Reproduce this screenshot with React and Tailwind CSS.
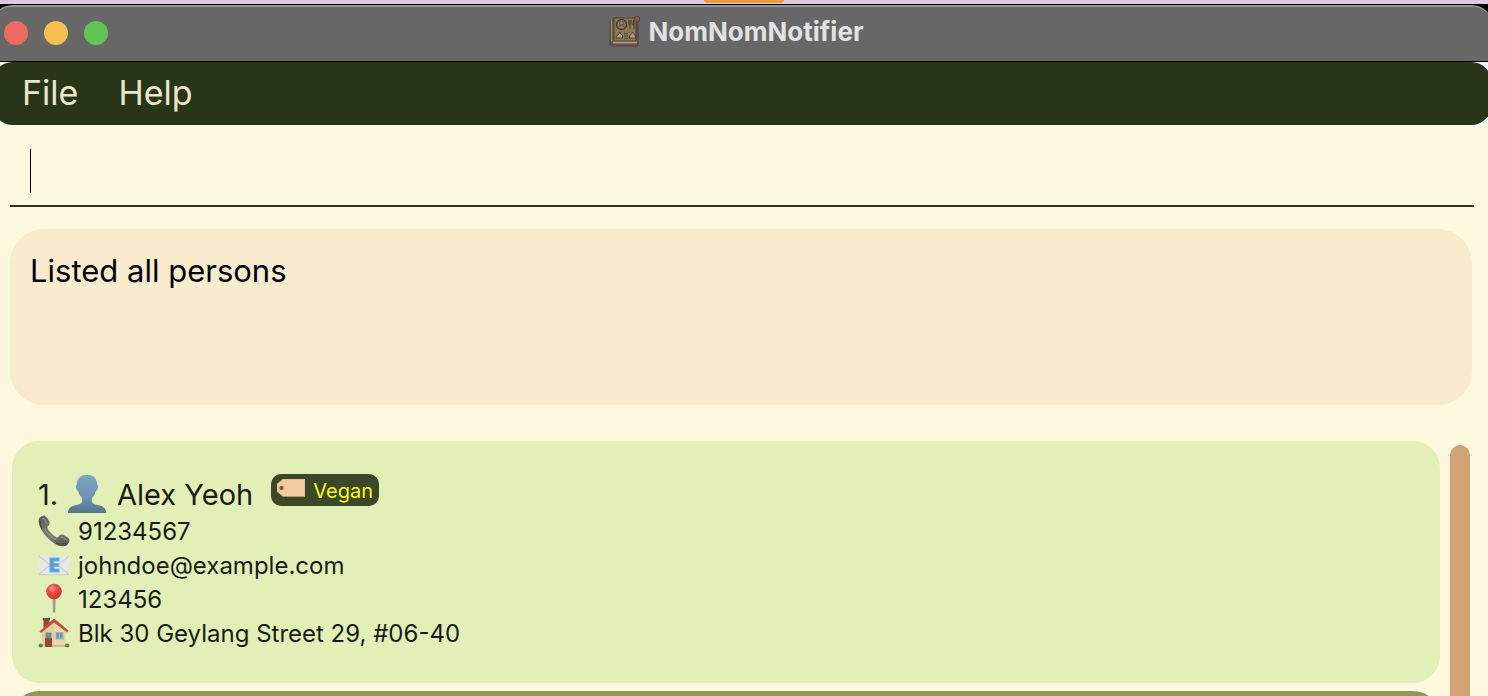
import React from "react";

function BookIcon() {
  return (
    <svg viewBox="0 0 32 32" className="size-8" aria-hidden="true">
      <path d="M3 4 Q1 4 1 7 V26 Q1 30 4 30 H28 Q29 30 29 28 V4 Z" fill="#74583d" stroke="#4e4248" strokeWidth="1.2" />
      <path d="M5 2 H27 V25 H5 Z" fill="#8b7a4f" stroke="#4c4143" strokeWidth="1.2" />
      <path d="M2.500 3.500 V25" stroke="#a1844e" strokeWidth="1.400" />
      <path d="M4 26.500 H28" stroke="#a89a80" strokeWidth="1.800" />
      <path d="M2 29.500 H28" stroke="#674950" strokeWidth="1.500" />
      <circle cx="12.500" cy="8.500" r="5" fill="#8c7f58" stroke="#413c42" strokeWidth="1.400" />
      <circle cx="12.500" cy="7" r="2" fill="#a6854c" stroke="#4d4242" strokeWidth=".8" />
      <path d="M9 12 Q9.500 9.500 12.500 9.500 T16 12" fill="#a6854c" stroke="#4d4242" strokeWidth=".8" />
      <path d="M20 4 V7.500 Q20 8.500 21 8.500 T22 7.500 V4 M21 4 V13 M25 13 V4 Q23.500 6 24 9 H25" fill="none" stroke="#413c42" strokeWidth="1" />
      <circle cx="28" cy="3" r="2.800" fill="#80623e" stroke="#4d4248" strokeWidth="1" />
      <path d="M7 22 Q7.500 19 10 18 L10.500 16 L12 18 Q14 19 14 22 Z M20 22 Q20.500 19 22.500 18 L23.500 16 L25 18 Q26.500 19 26.500 22 Z" fill="#b3a076" stroke="#464047" strokeWidth="1" />
      <path d="M15 17.500 H19 M15 20 H19 M15 22.500 H19" stroke="#4d493e" strokeWidth="1" />
    </svg>
  );
}

function PersonIcon() {
  return (
    <svg viewBox="0 0 40 40" className="size-10" aria-hidden="true">
      <defs>
        <linearGradient id="bust" x1="0" y1="0" x2="0" y2="1">
          <stop offset="0" stopColor="#7fa6c4" />
          <stop offset=".6" stopColor="#7092ae" />
          <stop offset="1" stopColor="#53748f" />
        </linearGradient>
      </defs>
      <path
        d="M20 .8 C13.500 .8 9.800 5 9.800 10.500 Q8.600 11 9 13.500 Q9.500 16.500 11 17 Q12 21 15 24 V28 Q14.500 30 9 31 Q1 32.500 .8 39 H39.300 Q39 32.500 31 31 Q25.500 30 25 28 V24 Q28 21 29 17 Q30.500 16.500 31 13.500 Q31.400 11 30.200 10.500 C30.200 5 26.500 .8 20 .8 Z"
        fill="url(#bust)"
      />
    </svg>
  );
}

function PhoneIcon() {
  return (
    <svg viewBox="0 0 32 32" className="size-8" aria-hidden="true">
      <defs>
        <linearGradient id="handset" x1="0" y1="0" x2="1" y2="1">
          <stop offset="0" stopColor="#5a5d58" />
          <stop offset=".5" stopColor="#797b77" />
          <stop offset="1" stopColor="#4e514e" />
        </linearGradient>
      </defs>
      <path
        d="M1 3.500 Q3 .5 6.500 .5 Q9 2 11.300 6.500 Q12.500 9.500 9.500 11.500 Q8.500 13 12 17 Q15.500 21 18.500 22.500 Q20.500 23 21.500 20.500 Q23.500 18.500 26.500 20.500 Q30.500 22.500 31.500 25 Q31 29 27.500 31 Q22 32.500 15 27.500 Q7.500 22 3.500 15 Q-.5 8 1 3.500 Z"
        fill="url(#handset)"
      />
      <path d="M4 3 Q7 4 8.500 9 M6 13 Q10 20 18 25 M23 22 Q28 23 29 26" fill="none" stroke="#92958e" strokeWidth="1.300" />
      <path d="M2 6 Q2 10 4 14 M18 28 Q23 31 28 28" fill="none" stroke="#444744" strokeWidth="1.200" />
    </svg>
  );
}

function MailIcon() {
  return (
    <svg viewBox="0 0 32 32" className="size-8" aria-hidden="true">
      <rect x=".8" y="6" width="30.500" height="20" rx="1" fill="#e5e8e6" />
      <path d="M1 7 L13 17 Q16 19 19 17 L31 7 M1 25.500 L12 16 M31 25.500 L20 16" fill="none" stroke="#cbd0d0" strokeWidth="1.200" />
      <path d="M1 25.700 H31" stroke="#c5cac5" strokeWidth="1" />
      <path d="M12 9 H21 V12 H15.800 V14.500 H20.500 V17.300 H15.800 V20 H21 V23 H12 Z" fill="#559bd8" stroke="#78b0df" strokeWidth="1.2" />
    </svg>
  );
}

function PinIcon() {
  return (
    <svg viewBox="0 0 32 32" className="size-8" aria-hidden="true">
      <defs>
        <radialGradient id="pinhead" cx=".38" cy=".3" r=".75">
          <stop offset="0" stopColor="#ff9b8e" />
          <stop offset=".35" stopColor="#ec5147" />
          <stop offset="1" stopColor="#c92f2b" />
        </radialGradient>
      </defs>
      <path d="M14.600 14 H17.600 L17.300 29 L16 30 L14.900 29 Z" fill="#989e87" />
      <circle cx="16" cy="8.500" r="7.800" fill="url(#pinhead)" />
    </svg>
  );
}

function HouseIcon() {
  return (
    <svg viewBox="0 0 32 32" className="size-8" aria-hidden="true">
      <path d="M5.500 2 H11.500 V9 L5.500 13 Z" fill="#9c4939" />
      <path d="M4.800 1 H12 V3.200 H4.800 Z" fill="#74483d" />
      <path d="M4 14 L16 4 L28 14 V30 H4 Z" fill="#ebd7ab" />
      <path d="M4 14 L16 4 V30 H4 Z" fill="#e4cda0" />
      <path d="M1.500 14.500 L15 2.300 Q16 1.500 17 2.300 L30.500 13.500 L29 15.500 L16 5.500 L3 16 Z" fill="#bd5043" />
      <rect x="7" y="21" width="7" height="9" fill="#8c4b32" />
      <rect x="8" y="16" width="5" height="5" fill="#579ac4" stroke="#a1704f" strokeWidth=".8" />
      <rect x="18" y="15.500" width="7" height="6.500" fill="#59a2cf" stroke="#bfa989" strokeWidth="1" />
      <path d="M21.500 16 V22" stroke="#94bfcb" strokeWidth=".8" />
      <path d="M14 28 H28 V30 H14 Z" fill="#d3b993" />
      <ellipse cx="2.800" cy="28.500" rx="2.300" ry="2" fill="#648a3c" />
      <ellipse cx="29.200" cy="28.500" rx="2.300" ry="2" fill="#648a3c" />
    </svg>
  );
}

function TagIcon() {
  return (
    <svg viewBox="0 0 28 18" className="mb-1 h-[18px] w-7" aria-hidden="true">
      <path d="M6 0 H28 V17.500 H6 L0 12.500 V5 Z" fill="#f3cba1" stroke="#c4a580" strokeWidth=".6" />
      <circle cx="4.500" cy="9" r="2.300" fill="#876c54" />
      <circle cx="4.500" cy="9" r=".9" fill="#51482f" />
    </svg>
  );
}

const details = [
  { Icon: PhoneIcon, text: "91234567" },
  { Icon: MailIcon, text: "johndoe@example.com" },
  { Icon: PinIcon, text: "123456" },
  { Icon: HouseIcon, text: "Blk 30 Geylang Street 29, #06-40" },
];

function PersonCard() {
  return (
    <li className="rounded-[27px] bg-[#e2efb7] px-[26px] py-[33px] text-[#181c14]">
      <div className="flex h-10 items-center">
        <h2 className="flex items-center text-[29px] leading-10">
          <span className="w-[29px] pt-0.5">1.</span>
          <PersonIcon />
          <span className="ml-2.5 pt-0.5">Alex Yeoh</span>
        </h2>
        <span className="mb-2 ml-[18px] flex h-8 items-center gap-2 rounded-[10px] bg-[#3c4728] px-1.5 text-[20px] text-[#fbfb1d]">
          <TagIcon />
          <span className="pt-0.5">Vegan</span>
        </span>
      </div>
      <ul>
        {details.map(({ Icon, text }) => (
          <li key={text} className="flex h-[34px] items-center gap-2 text-[24px]">
            <Icon />
            <span className="pt-0.5">{text}</span>
          </li>
        ))}
      </ul>
    </li>
  );
}

function TitleBar() {
  return (
    <div className="bg-black">
      <header className="-mr-1 -ml-2 flex h-14 items-center rounded-t-[20px] border-t-2 border-[#929292] bg-[#676767] pr-6 pb-0.5 pl-3">
        <div className="flex flex-1 gap-4">
          <button aria-label="Close" className="size-6 rounded-full bg-[#ed6a5f]" />
          <button aria-label="Minimize" className="size-6 rounded-full bg-[#f5bf4f]" />
          <button aria-label="Zoom" className="size-6 rounded-full bg-[#61c554]" />
        </div>
        <h1 className="flex items-center gap-2 pb-0.5 text-[26px] leading-8 font-bold text-[#e2e2e2]">
          <BookIcon />
          NomNomNotifier
        </h1>
        <div className="flex-1" />
      </header>
    </div>
  );
}

export default function App() {
  return (
    <div className="flex h-screen flex-col overflow-hidden bg-[#fef8df] font-['Inter','Liberation_Sans',sans-serif]">
      <div className="flex h-[5px] shrink-0 justify-center border-b border-black bg-[#dccbdd]">
        <div className="h-[3px] w-20 rounded-b-full bg-[#f09a37]" />
      </div>
      <TitleBar />
      <div className="border-t border-black bg-[#f3f1f3]">
        <nav className="-mr-1 -ml-2 flex h-[63px] items-center gap-10 rounded-[21px] bg-[#293519] pb-0.5 pl-[30px] text-[34px] text-[#eae6c9]">
          <button>File</button>
          <button>Help</button>
        </nav>
      </div>

      <main className="flex min-h-0 flex-1 flex-col">
        <div className="relative mr-3.5 ml-2.5 shrink-0">
          <input
            aria-label="Command"
            className="block h-[82px] w-full border-b-2 border-[#293519] bg-transparent px-5 text-[31px] text-black caret-transparent outline-none"
          />
          <span className="absolute top-6 left-5 h-11 w-px bg-black" />
        </div>

        <textarea
          aria-label="Result"
          readOnly
          value="Listed all persons"
          className="mr-4 mt-[22px] ml-2.5 block h-44 shrink-0 resize-none rounded-[34px] bg-[#f9ebcd] px-5 py-[21px] text-[31px] leading-[42px] text-black outline-none"
        />

        <div className="mt-9 mr-[18px] ml-3 flex min-h-0 flex-1 gap-2.5">
          <ul className="flex min-w-0 flex-1 flex-col gap-2 overflow-hidden">
            <PersonCard />
            <li className="h-[242px] shrink-0 rounded-[27px] bg-[#8c9b5c]" />
          </ul>
          <div className="mt-1 w-5 rounded-t-full bg-[#d3a275]" />
        </div>
      </main>
    </div>
  );
}
